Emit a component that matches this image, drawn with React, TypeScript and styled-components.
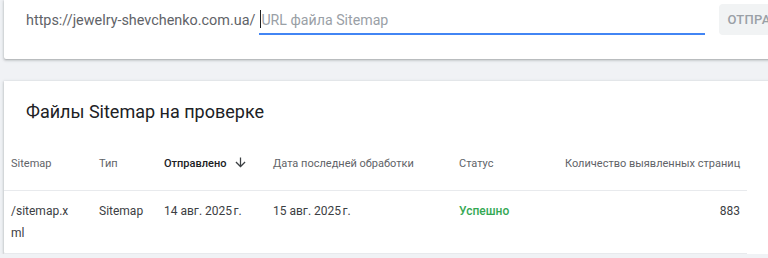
import React from "react";
import styled, { createGlobalStyle } from "styled-components";

const GlobalStyle = createGlobalStyle`
  html, body {
    margin: 0;
    padding: 0;
    background: #f0f2f5;
    overflow: hidden;
  }
  body {
    font-family: Roboto, "Liberation Sans", Arial, sans-serif;
    color: #202124;
  }
`;

const Page = styled.div`
  width: 800px;
  padding: 0 0 0 4px;
  display: flex;
  flex-direction: column;
  gap: 22px;
`;

const Card = styled.section`
  background: #fff;
  border-radius: 0 0 2px 2px;
  box-shadow: 0 1px 2px rgba(60, 64, 67, 0.3), 0 1px 3px 1px rgba(60, 64, 67, 0.12);
`;

const SubmitBar = styled(Card)`
  height: 59px;
  display: flex;
  align-items: flex-start;
  padding: 4px 0 0 22px;
  box-sizing: border-box;
`;

const Prefix = styled.span`
  font-size: 14.4px;
  line-height: 20px;
  padding-top: 7px;
  color: #5f6368;
  white-space: nowrap;
`;

const Field = styled.label`
  position: relative;
  flex: 0 0 446px;
  margin-left: 4px;
  height: 29px;
  border-bottom: 2px solid #4285f4;
  display: flex;
  align-items: center;

  &::before {
    content: "";
    position: absolute;
    left: 1px;
    top: 6px;
    width: 1px;
    height: 18px;
    background: #202124;
  }
`;

const Input = styled.input`
  border: 0;
  outline: 0;
  padding: 3px 0 0 2px;
  width: 100%;
  font-family: inherit;
  font-size: 14.2px;
  color: #202124;
  background: transparent;
  caret-color: transparent;

  &::placeholder {
    color: #9aa0a6;
  }
`;

const SendButton = styled.button`
  flex: none;
  margin-left: 14px;
  height: 31px;
  padding: 0 8px;
  border: 0;
  border-radius: 4px;
  background: #f1f3f4;
  color: #9aa0a6;
  font-family: inherit;
  font-size: 13px;
  font-weight: 500;
  letter-spacing: 0.3px;
  text-transform: uppercase;
`;

const Title = styled.h2`
  margin: 0;
  padding: 17px 22px 0;
  font-size: 18px;
  font-weight: 400;
  line-height: 28px;
  color: #202124;
`;

const Table = styled.table`
  border-collapse: collapse;
  table-layout: fixed;
  width: 743px;
  margin-top: 29px;
`;

const HeadCell = styled.th<{ $active?: boolean; $right?: boolean }>`
  padding: 0 7px 17px;
  font-size: 11px;
  line-height: 18px;
  text-align: ${(p) => (p.$right ? "right" : "left")};
  font-weight: ${(p) => (p.$active ? 500 : 400)};
  color: ${(p) => (p.$active ? "#202124" : "#5f6368")};
  border-bottom: 1px solid #e8eaed;
  white-space: nowrap;
`;

const SortIcon = styled.svg`
  width: 15px;
  height: 15px;
  margin-left: 7px;
  vertical-align: -3px;
  fill: #3c4043;
`;

const Cell = styled.td<{ $status?: boolean; $right?: boolean }>`
  padding: 9px 7px;
  font-size: 12px;
  line-height: 22px;
  vertical-align: top;
  text-align: ${(p) => (p.$right ? "right" : "left")};
  color: ${(p) => (p.$status ? "#34a853" : "#3c4043")};
  font-weight: ${(p) => (p.$status ? 500 : 400)};
  border-bottom: 1px solid #e8eaed;
`;

const PathText = styled.span`
  display: block;
  width: 60px;
  word-break: break-all;
`;

const columns = [
  { label: "Sitemap", width: 88 },
  { label: "Тип", width: 65 },
  { label: "Отправлено", width: 109, active: true },
  { label: "Дата последней обработки", width: 186 },
  { label: "Статус", width: 106 },
  { label: "Количество выявленных страниц", width: 189, right: true },
];

export default function App() {
  return (
    <>
      <GlobalStyle />
      <Page>
        <SubmitBar>
          <Prefix>https://jewelry-shevchenko.com.ua/</Prefix>
          <Field>
            <Input placeholder="URL файла Sitemap" />
          </Field>
          <SendButton>Отправить</SendButton>
        </SubmitBar>

        <Card>
          <Title>Файлы Sitemap на проверке</Title>
          <Table>
            <colgroup>
              {columns.map((c) => (
                <col key={c.label} style={{ width: c.width }} />
              ))}
            </colgroup>
            <thead>
              <tr>
                {columns.map((c) => (
                  <HeadCell key={c.label} $active={c.active} $right={c.right}>
                    {c.label}
                    {c.active && (
                      <SortIcon viewBox="0 0 24 24">
                        <path d="M20 12l-1.41-1.41L13 16.17V4h-2v12.17l-5.58-5.59L4 12l8 8 8-8z" />
                      </SortIcon>
                    )}
                  </HeadCell>
                ))}
              </tr>
            </thead>
            <tbody>
              <tr>
                <Cell>
                  <PathText>/sitemap.xml</PathText>
                </Cell>
                <Cell>Sitemap</Cell>
                <Cell>14 авг. 2025{"\u202F"}г.</Cell>
                <Cell>15 авг. 2025{"\u202F"}г.</Cell>
                <Cell $status>Успешно</Cell>
                <Cell $right>883</Cell>
              </tr>
            </tbody>
          </Table>
        </Card>
      </Page>
    </>
  );
}
